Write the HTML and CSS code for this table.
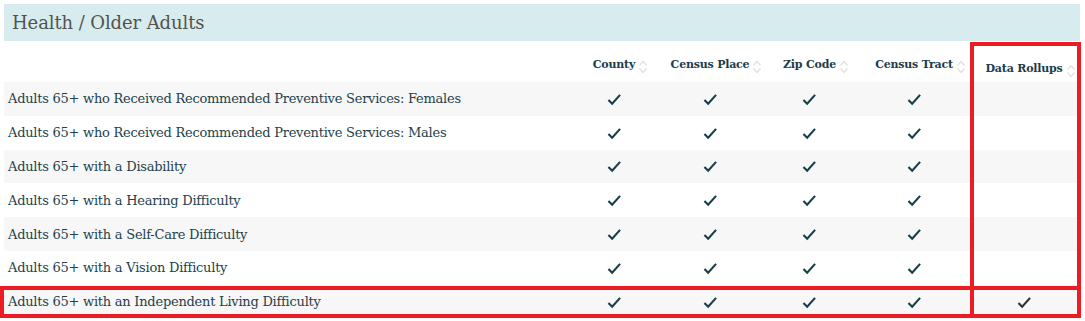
FILE: index.html
```html
<!DOCTYPE html>
<html lang="en">
<head>
<meta charset="utf-8">
<title>Health / Older Adults</title>
<link rel="stylesheet" href="styles.css">
</head>
<body>
<div class="page">
  <h2 class="section-title">Health / Older Adults</h2>
  <table class="data-table">
    <colgroup>
      <col class="c-name"><col class="c-county"><col class="c-place"><col class="c-zip"><col class="c-tract"><col class="c-roll">
    </colgroup>
    <thead>
      <tr>
        <th class="name-h"></th>
        <th><span class="lbl">County<svg class="sort" viewBox="0 0 10 16"><path d="M1.5 6.5 L5 2.5 L8.5 6.5 M1.5 9.5 L5 13.5 L8.5 9.5"/></svg></span></th>
        <th><span class="lbl">Census Place<svg class="sort" viewBox="0 0 10 16"><path d="M1.5 6.5 L5 2.5 L8.5 6.5 M1.5 9.5 L5 13.5 L8.5 9.5"/></svg></span></th>
        <th><span class="lbl">Zip Code<svg class="sort" viewBox="0 0 10 16"><path d="M1.5 6.5 L5 2.5 L8.5 6.5 M1.5 9.5 L5 13.5 L8.5 9.5"/></svg></span></th>
        <th><span class="lbl">Census Tract<svg class="sort" viewBox="0 0 10 16"><path d="M1.5 6.5 L5 2.5 L8.5 6.5 M1.5 9.5 L5 13.5 L8.5 9.5"/></svg></span></th>
        <th class="roll-h"><span class="lbl">Data Rollups<svg class="sort" viewBox="0 0 10 16"><path d="M1.5 6.5 L5 2.5 L8.5 6.5 M1.5 9.5 L5 13.5 L8.5 9.5"/></svg></span></th>
      </tr>
    </thead>
    <tbody>
      <tr><td class="name">Adults 65+ who Received Recommended Preventive Services: Females</td><td><svg class="chk" viewBox="0 0 16 14"><path d="M1.5 7.5 L5.5 11.5 L14 2"/></svg></td><td><svg class="chk" viewBox="0 0 16 14"><path d="M1.5 7.5 L5.5 11.5 L14 2"/></svg></td><td><svg class="chk" viewBox="0 0 16 14"><path d="M1.5 7.5 L5.5 11.5 L14 2"/></svg></td><td><svg class="chk" viewBox="0 0 16 14"><path d="M1.5 7.5 L5.5 11.5 L14 2"/></svg></td><td></td></tr>
      <tr><td class="name">Adults 65+ who Received Recommended Preventive Services: Males</td><td><svg class="chk" viewBox="0 0 16 14"><path d="M1.5 7.5 L5.5 11.5 L14 2"/></svg></td><td><svg class="chk" viewBox="0 0 16 14"><path d="M1.5 7.5 L5.5 11.5 L14 2"/></svg></td><td><svg class="chk" viewBox="0 0 16 14"><path d="M1.5 7.5 L5.5 11.5 L14 2"/></svg></td><td><svg class="chk" viewBox="0 0 16 14"><path d="M1.5 7.5 L5.5 11.5 L14 2"/></svg></td><td></td></tr>
      <tr><td class="name">Adults 65+ with a Disability</td><td><svg class="chk" viewBox="0 0 16 14"><path d="M1.5 7.5 L5.5 11.5 L14 2"/></svg></td><td><svg class="chk" viewBox="0 0 16 14"><path d="M1.5 7.5 L5.5 11.5 L14 2"/></svg></td><td><svg class="chk" viewBox="0 0 16 14"><path d="M1.5 7.5 L5.5 11.5 L14 2"/></svg></td><td><svg class="chk" viewBox="0 0 16 14"><path d="M1.5 7.5 L5.5 11.5 L14 2"/></svg></td><td></td></tr>
      <tr><td class="name">Adults 65+ with a Hearing Difficulty</td><td><svg class="chk" viewBox="0 0 16 14"><path d="M1.5 7.5 L5.5 11.5 L14 2"/></svg></td><td><svg class="chk" viewBox="0 0 16 14"><path d="M1.5 7.5 L5.5 11.5 L14 2"/></svg></td><td><svg class="chk" viewBox="0 0 16 14"><path d="M1.5 7.5 L5.5 11.5 L14 2"/></svg></td><td><svg class="chk" viewBox="0 0 16 14"><path d="M1.5 7.5 L5.5 11.5 L14 2"/></svg></td><td></td></tr>
      <tr><td class="name">Adults 65+ with a Self-Care Difficulty</td><td><svg class="chk" viewBox="0 0 16 14"><path d="M1.5 7.5 L5.5 11.5 L14 2"/></svg></td><td><svg class="chk" viewBox="0 0 16 14"><path d="M1.5 7.5 L5.5 11.5 L14 2"/></svg></td><td><svg class="chk" viewBox="0 0 16 14"><path d="M1.5 7.5 L5.5 11.5 L14 2"/></svg></td><td><svg class="chk" viewBox="0 0 16 14"><path d="M1.5 7.5 L5.5 11.5 L14 2"/></svg></td><td></td></tr>
      <tr><td class="name">Adults 65+ with a Vision Difficulty</td><td><svg class="chk" viewBox="0 0 16 14"><path d="M1.5 7.5 L5.5 11.5 L14 2"/></svg></td><td><svg class="chk" viewBox="0 0 16 14"><path d="M1.5 7.5 L5.5 11.5 L14 2"/></svg></td><td><svg class="chk" viewBox="0 0 16 14"><path d="M1.5 7.5 L5.5 11.5 L14 2"/></svg></td><td><svg class="chk" viewBox="0 0 16 14"><path d="M1.5 7.5 L5.5 11.5 L14 2"/></svg></td><td></td></tr>
      <tr><td class="name">Adults 65+ with an Independent Living Difficulty</td><td><svg class="chk" viewBox="0 0 16 14"><path d="M1.5 7.5 L5.5 11.5 L14 2"/></svg></td><td><svg class="chk" viewBox="0 0 16 14"><path d="M1.5 7.5 L5.5 11.5 L14 2"/></svg></td><td><svg class="chk" viewBox="0 0 16 14"><path d="M1.5 7.5 L5.5 11.5 L14 2"/></svg></td><td><svg class="chk" viewBox="0 0 16 14"><path d="M1.5 7.5 L5.5 11.5 L14 2"/></svg></td><td><svg class="chk dark" viewBox="0 0 16 14"><path d="M1.5 7.5 L5.5 11.5 L14 2"/></svg></td></tr>
    </tbody>
  </table>
  <div class="hl hl-col"></div>
  <div class="hl hl-row"></div>
</div>
</body>
</html>
```
FILE: styles.css
```css
html, body {
  margin: 0;
  padding: 0;
  background: #ffffff;
}
.page {
  position: relative;
  padding: 4px 5px 0 4px;
  font-family: "DejaVu Serif", "Liberation Serif", serif;
  color: #1f3e4a;
}
.section-title {
  margin: 0;
  height: 37px;
  box-sizing: border-box;
  padding: 0 8px;
  display: flex;
  align-items: center;
  background: #d7ecee;
  font-size: 18px;
  font-weight: normal;
  color: #55524d;
  letter-spacing: -0.1px;
}
.data-table {
  width: 1076px;
  border-collapse: collapse;
  table-layout: fixed;
}
.c-name { width: 563px; }
.c-county { width: 94px; }
.c-place { width: 98px; }
.c-zip { width: 101px; }
.c-tract { width: 108px; }
.c-roll { width: 112px; }
.data-table th {
  height: 41px;
  padding: 0;
  text-align: center;
  vertical-align: middle;
  font-size: 11px;
  font-weight: bold;
  color: #1b3c4b;
  white-space: nowrap;
  letter-spacing: -0.2px;
}
.lbl {
  position: relative;
  display: inline-block;
  top: 3px;
}
.roll-h .lbl {
  top: 7px;
}
.sort {
  position: absolute;
  left: calc(100% + 3px);
  top: 1px;
  width: 10px;
  height: 16px;
  fill: none;
  stroke: #e2e2e2;
  stroke-width: 1.4;
}
.data-table td {
  height: 33.8px;
  padding: 0;
  text-align: center;
  vertical-align: middle;
  font-size: 13px;
}
.data-table td.name {
  text-align: left;
  padding-left: 4px;
  white-space: nowrap;
  color: #243f4b;
  letter-spacing: -0.25px;
}
.data-table tbody tr:nth-child(odd) {
  background: #f7f7f7;
}
.chk {
  display: block;
  margin: 1px auto 0;
  width: 15px;
  height: 13px;
  fill: none;
  stroke: #173f4a;
  stroke-width: 2.3;
  stroke-linecap: butt;
  stroke-linejoin: miter;
}
.chk.dark {
  stroke: #2b3336;
}
.hl {
  position: absolute;
  box-sizing: border-box;
  border: 4px solid #ec1c24;
  pointer-events: none;
}
.hl-col {
  left: 970px;
  top: 42px;
  width: 111px;
  height: 276px;
}
.hl-row {
  left: 0;
  top: 286px;
  width: 1081px;
  height: 32px;
}
```
